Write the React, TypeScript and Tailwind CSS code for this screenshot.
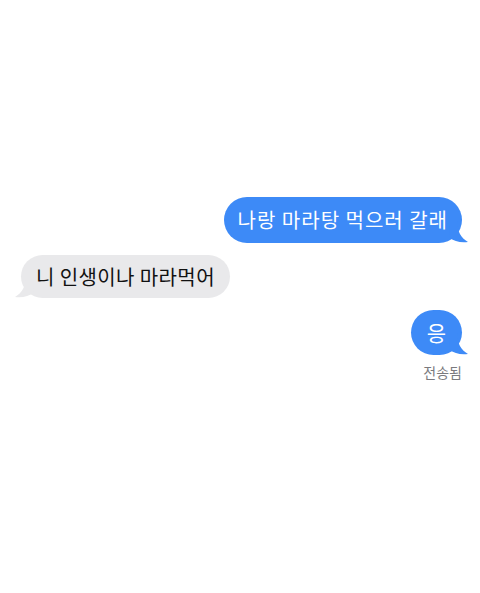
import React from "react";

const font = { fontFamily: '"Noto Sans CJK KR", "Noto Sans", sans-serif' };

function TailRight({ color }: { color: string }) {
  return (
    <svg className="absolute -right-[7px] bottom-0" width="20" height="22" viewBox="0 0 20 22">
      <path d="M0 0 L8 0 C8 10 12 17 19 21 C11 22 5 20 1 17 Z" fill={color} />
    </svg>
  );
}

function TailLeft({ color }: { color: string }) {
  return (
    <svg className="absolute -left-[7px] bottom-0" width="20" height="22" viewBox="0 0 20 22">
      <path d="M20 0 L12 0 C12 10 8 17 1 21 C9 22 15 20 19 17 Z" fill={color} />
    </svg>
  );
}

export default function App() {
  return (
    <div className="w-[480px] h-[593px] bg-white flex flex-col" style={font}>
      <div className="flex justify-end pr-[18px] pt-[197px]">
        <div className="relative bg-[#3d8af7] text-white rounded-[23px] h-[46px] pl-[14px] pr-[14px] flex items-center text-[20px] tracking-[1px]">
          <span className="relative z-10">나랑 마라탕 먹으러 갈래</span>
          <TailRight color="#3d8af7" />
        </div>
      </div>
      <div className="flex justify-start pl-[21px] mt-[12px]">
        <div className="relative bg-[#e9e9eb] text-[#111] rounded-[22px] h-[43px] px-[15px] flex items-center text-[20px] tracking-[0.4px]">
          <span className="relative z-10">니 인생이나 마라먹어</span>
          <TailLeft color="#e9e9eb" />
        </div>
      </div>
      <div className="flex justify-end pr-[18px] mt-[12px]">
        <div className="relative bg-[#3d8af7] text-white rounded-[23px] h-[45px] w-[51px] flex items-center justify-center text-[21px]">
          <span className="relative z-10">응</span>
          <TailRight color="#3d8af7" />
        </div>
      </div>
      <div className="flex justify-end pr-[18px] mt-[9px] text-[14px] leading-[16px] text-[#7a7a7e]">
        전송됨
      </div>
    </div>
  );
}
